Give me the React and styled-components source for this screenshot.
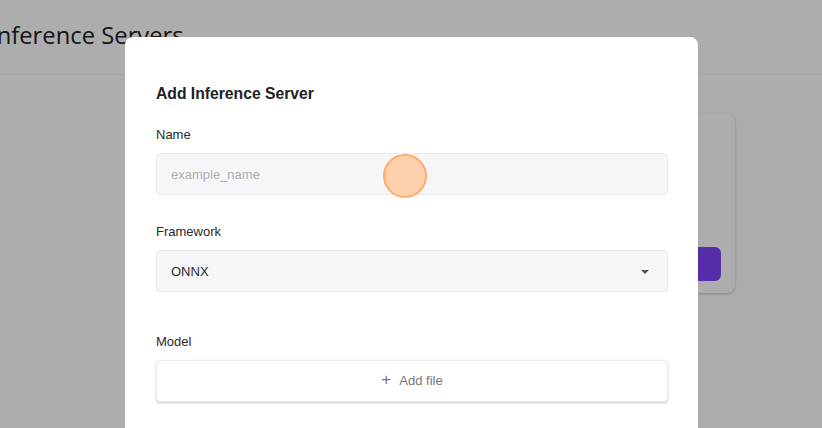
import React from 'react';
import styled, { createGlobalStyle } from 'styled-components';

const GlobalStyle = createGlobalStyle`
  html, body {
    margin: 0;
    padding: 0;
    background: #ffffff;
    overflow: hidden;
  }
  body {
    width: 822px;
    height: 428px;
    font-family: "Liberation Sans", Arial, sans-serif;
  }
`;

const Page = styled.div`
  width: 822px;
  height: 428px;
  position: relative;
  overflow: hidden;
  background: #ffffff;
`;

const PageHeader = styled.header`
  height: 75px;
  border-bottom: 1px solid #f0f0f0;
  box-sizing: border-box;
  display: flex;
  align-items: center;
  overflow: hidden;
`;

const PageTitle = styled.h1`
  margin: -4px 0 0 -10px;
  font-family: "Open Sans", "Noto Sans", sans-serif;
  font-weight: 400;
  font-size: 23.8px;
  color: #222222;
  white-space: nowrap;
`;

const Content = styled.main`
  display: flex;
  justify-content: flex-end;
  padding: 39px 87px 0 0;
`;

const ServerCard = styled.section`
  width: 420px;
  height: 179px;
  border-radius: 8px;
  background: #ffffff;
  box-shadow: 0 1px 3px rgba(0, 0, 0, 0.25);
  display: flex;
  align-items: flex-end;
  justify-content: flex-end;
  padding: 0 14px 12px 0;
  box-sizing: border-box;
`;

const PrimaryButton = styled.button`
  width: 110px;
  height: 34px;
  border: none;
  border-radius: 6px;
  background: #7e45f7;
`;

const Overlay = styled.div`
  position: absolute;
  inset: 0;
  background: rgba(0, 0, 0, 0.32);
`;

const Modal = styled.div`
  position: absolute;
  left: 125px;
  top: 37px;
  width: 573px;
  height: 460px;
  background: #ffffff;
  border-radius: 8px;
  padding: 46px 30px 0 31px;
  box-sizing: border-box;
  display: flex;
  flex-direction: column;
`;

const ModalTitle = styled.h2`
  margin: 0 0 22px;
  font-size: 15.7px;
  line-height: 22px;
  font-weight: 700;
  color: #222222;
`;

const Field = styled.div`
  display: flex;
  flex-direction: column;
  gap: 10px;
  margin-bottom: ${(p) => p.$after || 0}px;
`;

const Label = styled.label`
  font-size: 13px;
  line-height: 16px;
  color: #2a2a2a;
`;

const InputBox = styled.div`
  height: 42px;
  box-sizing: border-box;
  border: 1px solid #e9e9ec;
  border-radius: 4px;
  background: #f6f6f8;
  display: flex;
  align-items: center;
  justify-content: space-between;
  padding: 0 18px 0 14px;
  font-size: 13px;
  color: ${(p) => (p.$placeholder ? '#aeaeb2' : '#2a2a2a')};
`;

const Caret = styled.span`
  width: 0;
  height: 0;
  border-left: 4px solid transparent;
  border-right: 4px solid transparent;
  border-top: 4px solid #555555;
  margin-top: 1px;
`;

const UploadButton = styled.button`
  height: 42px;
  box-sizing: border-box;
  border: 1px solid #ececee;
  border-radius: 4px;
  background: #ffffff;
  box-shadow: 0 1px 2px rgba(0, 0, 0, 0.22);
  display: flex;
  align-items: center;
  justify-content: center;
  gap: 8px;
  font-family: "Liberation Sans", Arial, sans-serif;
  font-size: 13px;
  color: #77777b;
  padding: 0 0 2px;
`;

const Plus = styled.span`
  font-size: 17px;
  font-weight: 300;
  line-height: 1;
  margin-top: -2px;
`;

const ClickMarker = styled.span`
  position: absolute;
  left: 383px;
  top: 154px;
  width: 44px;
  height: 44px;
  box-sizing: border-box;
  border-radius: 50%;
  background: #ffd0ae;
  border: 2px solid #ffab65;
`;

export default function App() {
  return (
    <Page>
      <GlobalStyle />
      <PageHeader>
        <PageTitle>Inference Servers</PageTitle>
      </PageHeader>
      <Content>
        <ServerCard>
          <PrimaryButton />
        </ServerCard>
      </Content>
      <Overlay />
      <Modal>
        <ModalTitle>Add Inference Server</ModalTitle>
        <Field $after={29}>
          <Label>Name</Label>
          <InputBox $placeholder>example_name</InputBox>
        </Field>
        <Field $after={42}>
          <Label>Framework</Label>
          <InputBox>
            ONNX
            <Caret />
          </InputBox>
        </Field>
        <Field>
          <Label>Model</Label>
          <UploadButton>
            <Plus>+</Plus>
            Add file
          </UploadButton>
        </Field>
      </Modal>
      <ClickMarker />
    </Page>
  );
}
